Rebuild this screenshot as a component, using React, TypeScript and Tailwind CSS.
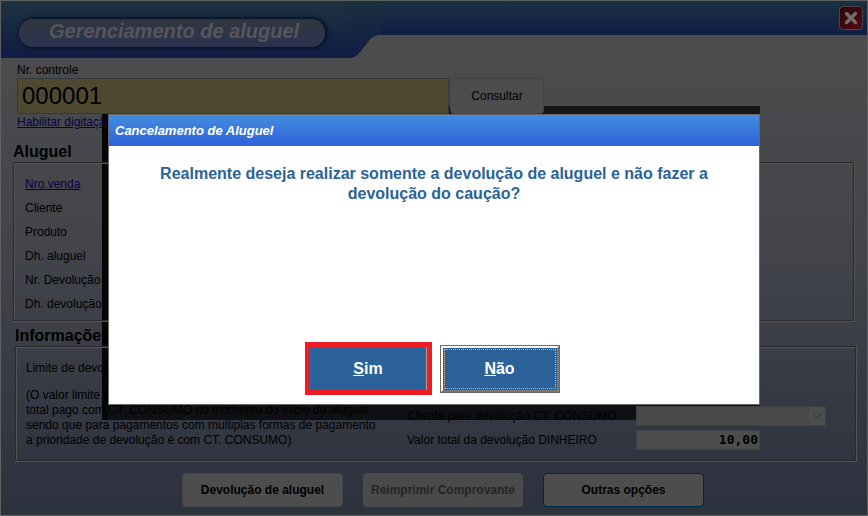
import React, { useState } from "react";

interface PanelProps {
  title: string;
  className?: string;
  children: React.ReactNode;
}

const Panel: React.FC<PanelProps> = ({ title, className = "", children }) => (
  <section className={className}>
    <h2 className="text-base leading-5 font-bold">{title}</h2>
    <div className="border-r border-b border-[#55534f]">
      <div className="border border-[#2a2a2b]">
        <div className="border-t border-l border-[#55534f]">{children}</div>
      </div>
    </div>
  </section>
);

const camposAluguel = ["Cliente", "Produto", "Dh. aluguel", "Nr. Devolução", "Dh. devolução"];

const Header: React.FC = () => (
  <header className="flex h-[57px] items-start">
    <div className="h-full w-[348px] bg-linear-to-b from-[#1e323f] to-[#101b45] pt-[18px] pl-[18px]">
      <h1 className="h-7 w-[306px] rounded-full bg-linear-to-b from-[#30363f] to-[#2b3350] pl-[30px] text-xl leading-6 font-bold text-[#56565a] italic shadow-[1px_0_3px_2px_#0b1426]">
        Gerenciamento de aluguel
      </h1>
    </div>
    <svg className="h-[57px] w-8" viewBox="0 0 32 57" aria-hidden="true">
      <defs>
        <linearGradient id="aba" x1="0" y1="0" x2="0" y2="1">
          <stop offset="0" stopColor="#1a303f" />
          <stop offset="1" stopColor="#101b45" />
        </linearGradient>
      </defs>
      <path d="M0 0H32V34C25 34 23 36 19 41L12 50C7 56 5 57 0 57Z" fill="url(#aba)" />
    </svg>
    <div className="flex h-[34px] flex-1 justify-end bg-linear-to-b from-[#1a303f] to-[#101f46] pt-[5px] pr-1">
      <button
        aria-label="Fechar"
        className="flex size-6 items-center justify-center rounded-sm border border-[#4c4448] bg-linear-to-br from-[#2a0508] to-[#560a10]"
      >
        <svg className="size-4" viewBox="0 0 16 16" aria-hidden="true">
          <path d="M3.5 3.5L12.5 12.5M12.5 3.5L3.5 12.5" stroke="#6e6e6e" strokeWidth="3.4" strokeLinecap="round" />
        </svg>
      </button>
    </div>
  </header>
);

const App: React.FC = () => {
  const [controle, setControle] = useState("000001");
  const [valor, setValor] = useState("10,00");

  return (
    <div className="relative isolate min-h-screen border border-[#606060] bg-linear-to-b from-[#4e4e4e] via-[#42444a] to-[#2c313e] font-['Liberation_Sans',Arial,sans-serif] text-xs text-black">
      <Header />

      {/* Sombra da janela modal */}
      <div className="absolute top-[105px] right-[107px] left-[101px] -z-10 h-[314px] border-l-6 border-[#050505] bg-linear-to-b from-[#171717] to-[#0f1013]" />

      <main className="pr-[10px] pl-3">
        <div className="pt-1 pl-1">
          <label htmlFor="controle" className="block leading-4">
            Nr. controle
          </label>
          <div className="flex gap-px">
            <input
              id="controle"
              value={controle}
              onChange={(e) => setControle(e.target.value)}
              className="h-9 w-[432px] border border-[#34373e] bg-[#4e4930] px-1 text-2xl"
            />
            <button className="h-9 w-[94px] rounded-sm border border-[#434343] bg-[#4d4d4d]">
              Consultar
            </button>
          </div>
          <a href="#" className="block w-fit leading-4 text-[#0c0048] underline">
            Habilitar digitação
          </a>
        </div>

        <Panel title="Aluguel" className="mt-3 mr-[2px]">
          <div className="flex h-[156px] flex-col px-[10px] pt-2 leading-6">
            <a href="#" className="w-fit text-[#0c0048] underline">
              Nro.venda
            </a>
            {camposAluguel.map((campo) => (
              <span key={campo}>{campo}</span>
            ))}
          </div>
        </Panel>

        <Panel title="Informações" className="mt-1 ml-[2px]">
          <div className="flex h-[112px] px-[9px] pt-3">
            <div className="w-[381px]">
              <p className="leading-4">Limite de devolução</p>
              <p className="mt-3 leading-[15px] whitespace-nowrap">
                (O valor limite de devolução corresponde ao valor
                <br />
                total pago com CT. CONSUMO no momento do inicio do aluguel,
                <br />
                sendo que para pagamentos com multiplas formas de pagamento
                <br />
                a prioridade de devolução é com CT. CONSUMO)
              </p>
            </div>
            <div className="grid h-fit grid-cols-[229px_190px] gap-y-1 pt-[46px] leading-5">
              <label htmlFor="cliente">Cliente para devolução CT. CONSUMO</label>
              <div className="relative">
                <select
                  id="cliente"
                  className="block h-5 w-full appearance-none border border-[#3f4041] bg-[#494949]"
                />
                <svg
                  className="pointer-events-none absolute top-px right-px h-[18px] w-4 bg-[#4d4d4d]"
                  viewBox="0 0 16 18"
                  aria-hidden="true"
                >
                  <path d="M4 7L8 11L12 7" fill="none" stroke="#303030" />
                </svg>
              </div>
              <label htmlFor="valor">Valor total da devolução DINHEIRO</label>
              <input
                id="valor"
                value={valor}
                onChange={(e) => setValor(e.target.value)}
                className="h-5 w-[124px] border border-[#3f4246] bg-[#4d4d4d] px-px text-right font-['DejaVu_Sans_Mono',monospace] text-[13px] font-bold"
              />
            </div>
          </div>
        </Panel>

        <div className="mt-[11px] mb-2 flex justify-center gap-5 pl-4 font-bold">
          <button className="h-[34px] w-[161px] rounded-sm border border-[#444] bg-[#4d4d4d]">
            Devolução de aluguel
          </button>
          <button
            disabled
            className="h-[34px] w-[160px] rounded-sm border border-[#4d4d4d] bg-[#4a4a4a] text-[#252525]"
          >
            Reimprimir Comprovante
          </button>
          <button className="h-[34px] w-[161px] rounded-sm border border-[#00264a] bg-[#4d4d4d]">
            Outras opções
          </button>
        </div>
      </main>

      <div
        role="dialog"
        aria-labelledby="titulo"
        className="absolute top-[113px] right-[107px] left-[107px] flex h-[291px] flex-col border border-[#686868] bg-white"
      >
        <h2
          id="titulo"
          className="bg-linear-to-b from-[#448de0] to-[#2f60d8] pl-[6px] text-[13px] leading-[31px] font-bold text-white italic"
        >
          Cancelamento de Aluguel
        </h2>
        <p className="px-10 pt-[18px] text-center text-base leading-5 font-bold text-[#2a6299]">
          Realmente deseja realizar somente a devolução de aluguel e não fazer a devolução do
          caução?
        </p>
        <div className="mt-auto mb-[9px] flex items-center justify-center gap-2 pr-1 text-base font-bold text-white">
          <button className="h-[53px] w-[127px] border-5 border-[#ed1c24] bg-[#2a6299] shadow-[inset_-1px_0_0_#a0a0a0]">
            <u>S</u>im
          </button>
          <button className="h-12 w-[120px] border border-[#696969] bg-[#2a6299]">
            <span className="flex h-full items-center justify-center border-2 border-t-white border-r-[#77777a] border-b-[#77777a] border-l-white p-px">
              <span className="flex h-full w-full items-center justify-center border border-dotted border-[#e8b078]">
                <span>
                  <u>N</u>ão
                </span>
              </span>
            </span>
          </button>
        </div>
      </div>
    </div>
  );
};

export default App;
